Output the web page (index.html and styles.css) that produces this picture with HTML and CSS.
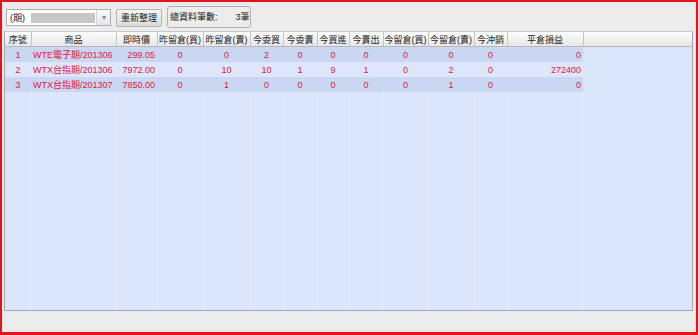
FILE: index.html
```html
<!DOCTYPE html>
<html lang="zh-TW">
<head>
    <meta charset="UTF-8">
    <title>未平倉查詢</title>
    <link rel="stylesheet" href="styles.css">
</head>
<body>
    <div class="window">
        <div class="toolbar">
            <div class="combo">
                <span class="combo-text">(期)</span>
                <span class="combo-mask"></span>
                <span class="combo-arrow">▾</span>
            </div>
            <button class="btn">重新整理</button>
            <div class="count-box">
                <span>總資料筆數:</span>
                <span class="count-value">3筆</span>
            </div>
        </div>

        <div class="grid">
            <table>
                <colgroup>
                    <col style="width:26px">
                    <col style="width:85px">
                    <col style="width:41px">
                    <col style="width:46px">
                    <col style="width:47px">
                    <col style="width:33px">
                    <col style="width:34px">
                    <col style="width:32px">
                    <col style="width:34px">
                    <col style="width:45px">
                    <col style="width:46px">
                    <col style="width:33px">
                    <col style="width:76px">
                    <col>
                </colgroup>
                <thead>
                    <tr>
                        <th>序號</th>
                        <th>商品</th>
                        <th>即時價</th>
                        <th>昨留倉(買)</th>
                        <th>昨留倉(賣)</th>
                        <th>今委買</th>
                        <th>今委賣</th>
                        <th>今買進</th>
                        <th>今賣出</th>
                        <th>今留倉(買)</th>
                        <th>今留倉(賣)</th>
                        <th>今沖銷</th>
                        <th>平倉損益</th>
                        <th class="spare"></th>
                    </tr>
                </thead>
                <tbody>
                    <tr class="row-dark">
                        <td>1</td>
                        <td class="name">WTE電子期/201306</td>
                        <td class="num">299.05</td>
                        <td>0</td><td>0</td><td>2</td><td>0</td><td>0</td><td>0</td><td>0</td><td>0</td><td>0</td>
                        <td class="num">0</td>
                        <td class="spare"></td>
                    </tr>
                    <tr class="row-light">
                        <td>2</td>
                        <td class="name">WTX台指期/201306</td>
                        <td class="num">7972.00</td>
                        <td>0</td><td>10</td><td>10</td><td>1</td><td>9</td><td>1</td><td>0</td><td>2</td><td>0</td>
                        <td class="num">272400</td>
                        <td class="spare"></td>
                    </tr>
                    <tr class="row-dark">
                        <td>3</td>
                        <td class="name">WTX台指期/201307</td>
                        <td class="num">7850.00</td>
                        <td>0</td><td>1</td><td>0</td><td>0</td><td>0</td><td>0</td><td>0</td><td>1</td><td>0</td>
                        <td class="num">0</td>
                        <td class="spare"></td>
                    </tr>
                    <tr class="filler">
                        <td></td><td></td><td></td><td></td><td></td><td></td><td></td>
                        <td></td><td></td><td></td><td></td><td></td><td></td>
                        <td class="spare"></td>
                    </tr>
                </tbody>
            </table>
        </div>
    </div>
</body>
</html>
```

FILE: styles.css
```css
body {
    margin: 0;
    background-color: #ffffff;
    font-family: "Liberation Sans", "Noto Sans CJK TC", sans-serif;
    font-size: 9px;
    color: #222;
}
.window {
    width: 698px;
    height: 335px;
    box-sizing: border-box;
    border: 2px solid #e3141c;
    border-bottom-width: 3px;
    background-color: #ececec;
    display: flex;
    flex-direction: column;
}
.toolbar {
    height: 29px;
    display: flex;
    align-items: center;
    padding: 0 0 0 4px;
    box-sizing: border-box;
    white-space: nowrap;
}
.combo {
    width: 105px;
    height: 17px;
    box-sizing: border-box;
    border: 1px solid #a9afb8;
    background-color: #fff;
    display: flex;
    align-items: center;
    margin-top: 2px;
}
.combo-text {
    padding-left: 3px;
    width: 21px;
}
.combo-mask {
    width: 64px;
    height: 10px;
    background-color: #c6c6c6;
}
.combo-arrow {
    margin-left: auto;
    width: 13px;
    height: 15px;
    line-height: 15px;
    text-align: center;
    color: #8a8a8a;
    font-size: 8px;
    background: linear-gradient(#fafafa, #e6e6e6);
    border-left: 1px solid #d5d5d5;
}
.btn {
    margin-left: 5px;
    margin-top: 2px;
    width: 46px;
    height: 18px;
    padding: 0;
    border: 1px solid #b4b4b4;
    border-radius: 2px;
    background: linear-gradient(#f6f6f6, #dadada);
    font-family: inherit;
    font-size: 9px;
    color: #222;
}
.count-box {
    margin-left: 5px;
    width: 84px;
    height: 22px;
    box-sizing: border-box;
    border: 1px solid #b2b2b2;
    border-radius: 3px;
    display: flex;
    align-items: center;
    padding-left: 2px;
}
.count-value {
    margin-left: 18px;
}
.grid {
    flex: 1;
    margin: 0 3px 21px 2px;
    border: 1px solid #a4a8b0;
    border-top-color: #c8c8c8;
    background-color: #dce6fb;
    overflow: hidden;
    display: flex;
}
table {
    width: 100%;
    border-collapse: collapse;
    table-layout: fixed;
}
th {
    height: 14px;
    padding: 0;
    font-weight: normal;
    text-align: center;
    white-space: nowrap;
    background: linear-gradient(#fdfdfd, #e6e6e6);
    border-right: 1px solid #c4c4c4;
    border-bottom: 1px solid #b8b8b8;
    color: #222;
}
th.spare {
    border-right: none;
}
td {
    height: 15px;
    padding: 0;
    text-align: center;
    white-space: nowrap;
    color: #e01838;
}
td.name {
    text-align: left;
    padding-left: 2px;
}
td.num {
    text-align: right;
    padding-right: 2px;
}
.row-dark td {
    background-color: #c9d7f3;
}
.row-light td {
    background-color: #dde6fa;
}
tr td.spare {
    background-color: transparent;
}
.filler td {
    height: auto;
    border-right: 1px solid rgba(255, 255, 255, 0.18);
}
.filler td.spare {
    border-right: none;
}
```
